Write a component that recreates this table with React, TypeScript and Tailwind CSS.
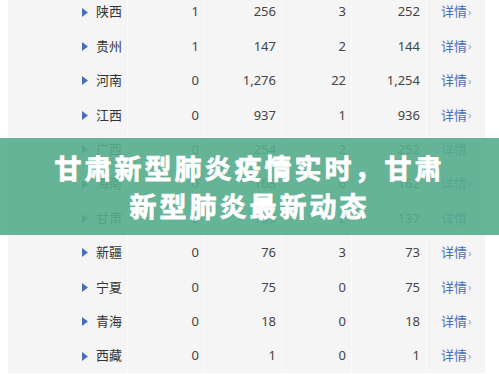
import React from "react";

type Row = [string, string, string, string, string];

const rows: Row[] = [
  ["陕西", "1", "256", "3", "252"],
  ["贵州", "1", "147", "2", "144"],
  ["河南", "0", "1,276", "22", "1,254"],
  ["江西", "0", "937", "1", "936"],
  ["广西", "0", "254", "2", "252"],
  ["海南", "0", "168", "6", "162"],
  ["甘肃", "0", "139", "2", "137"],
  ["新疆", "0", "76", "3", "73"],
  ["宁夏", "0", "75", "0", "75"],
  ["青海", "0", "18", "0", "18"],
  ["西藏", "0", "1", "0", "1"],
];

const font = {
  fontFamily: '"Noto Sans", "Noto Sans CJK SC", sans-serif',
};

const Arrow = () => (
  <svg width="6" height="9" viewBox="0 0 6 9" className="shrink-0">
    <path d="M0 0 L6 4.5 L0 9 Z" fill="#4a6fb6" />
  </svg>
);

export default function App() {
  return (
    <div className="relative h-[374px] w-[499px] overflow-hidden bg-white" style={font}>
      {/* table */}
      <div className="ml-[8px] -mt-[5px] w-[477px] bg-[#f5f5f5] text-[13px] text-[#444]">
        {rows.map((r) => (
          <div
            key={r[0]}
            className="grid h-[34.4px] grid-cols-[120px_77px_77px_70px_75px_58px] items-center"
          >
            <div className="flex h-full items-center justify-end gap-[8px] border-r border-[#fbfbfb] pr-[5px]">
              <Arrow />
              <span className="text-[#333]">{r[0]}</span>
            </div>
            <div className="flex h-full items-center justify-end border-r border-[#fbfbfb] pr-[5px]">{r[1]}</div>
            <div className="flex h-full items-center justify-end border-r border-[#fbfbfb] pr-[5px]">{r[2]}</div>
            <div className="flex h-full items-center justify-end border-r border-[#fbfbfb] pr-[5px]">{r[3]}</div>
            <div className="flex h-full items-center justify-end border-r border-[#fbfbfb] pr-[6px]">{r[4]}</div>
            <div className="flex h-full items-center pl-[14px] text-[#4a6db5]">
              详情<span className="ml-[1px] text-[11px] text-[#8fa3cf]">›</span>
            </div>
          </div>
        ))}
      </div>

      {/* title banner */}
      <div className="absolute left-0 top-[138px] flex h-[97px] w-[499px] flex-col items-center justify-center bg-[#56ad8d]/90">
        <div
          className="text-center text-[27px] font-bold leading-[38px] tracking-[3px] text-white [-webkit-text-stroke:0.8px_white] [text-shadow:0_0_1px_rgba(0,0,0,0.25)]"
          style={{ fontFamily: '"Noto Sans CJK SC", sans-serif' }}
        >
          <div>甘肃新型肺炎疫情实时，甘肃</div>
          <div>新型肺炎最新动态</div>
        </div>
      </div>
    </div>
  );
}
